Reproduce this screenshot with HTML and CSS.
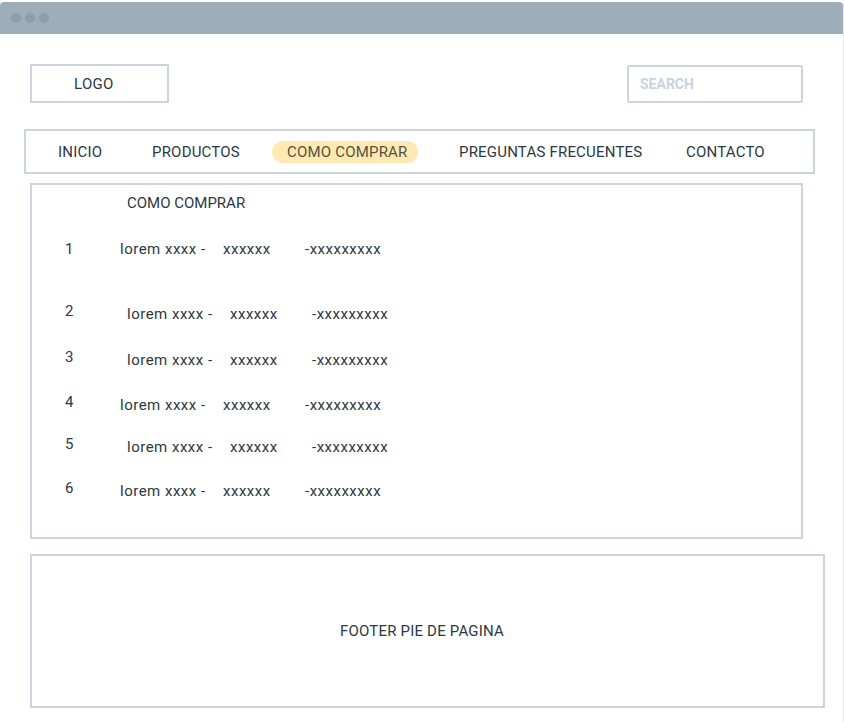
FILE: index.html
```html
<!DOCTYPE html>
<html lang="es">
<head>
<meta charset="utf-8">
<title>Como comprar</title>
<link rel="stylesheet" href="styles.css">
</head>
<body>
<div class="window">
  <div class="titlebar">
    <span class="dot"></span><span class="dot"></span><span class="dot"></span>
  </div>
  <header class="header">
    <div class="logo">LOGO</div>
    <div class="search">SEARCH</div>
  </header>
  <nav class="nav">
    <span class="nav-item">INICIO</span>
    <span class="nav-item">PRODUCTOS</span>
    <span class="nav-item"><span class="active">COMO COMPRAR</span></span>
    <span class="nav-item">PREGUNTAS FRECUENTES</span>
    <span class="nav-item">CONTACTO</span>
  </nav>
  <main class="content">
    <h1 class="title">COMO COMPRAR</h1>
    <div class="row r1"><span class="num">1</span><span class="txt"><span class="a">lorem xxxx -</span><span class="b">xxxxxx</span><span>-xxxxxxxxx</span></span></div>
    <div class="row r2 raised shift"><span class="num">2</span><span class="txt"><span class="a">lorem xxxx -</span><span class="b">xxxxxx</span><span>-xxxxxxxxx</span></span></div>
    <div class="row r3 raised shift"><span class="num">3</span><span class="txt"><span class="a">lorem xxxx -</span><span class="b">xxxxxx</span><span>-xxxxxxxxx</span></span></div>
    <div class="row r4 raised"><span class="num">4</span><span class="txt"><span class="a">lorem xxxx -</span><span class="b">xxxxxx</span><span>-xxxxxxxxx</span></span></div>
    <div class="row r5 raised shift"><span class="num">5</span><span class="txt"><span class="a">lorem xxxx -</span><span class="b">xxxxxx</span><span>-xxxxxxxxx</span></span></div>
    <div class="row r6 raised"><span class="num">6</span><span class="txt"><span class="a">lorem xxxx -</span><span class="b">xxxxxx</span><span>-xxxxxxxxx</span></span></div>
  </main>
  <footer class="footer">FOOTER PIE DE PAGINA</footer>
</div>
</body>
</html>
```
FILE: styles.css
```css
* { box-sizing: border-box; margin: 0; padding: 0; }
html, body { background: #ffffff; }
body {
  font-family: Roboto, "Liberation Sans", sans-serif;
  font-size: 15px;
  color: #2d3843;
}
.window {
  width: 844px;
  height: 722px;
  border-right: 1px solid #e6eaef;
}
.titlebar {
  margin-top: 2px;
  height: 32px;
  background: #9eadba;
  border-radius: 4px 4px 0 0;
  display: flex;
  align-items: center;
  gap: 4px;
  padding-left: 11px;
}
.dot {
  width: 10px;
  height: 10px;
  border-radius: 50%;
  background: #8f9eac;
}
.header {
  display: flex;
  justify-content: space-between;
  align-items: flex-start;
  margin-top: 30px;
  padding: 0 40px 0 30px;
}
.logo {
  width: 139px;
  height: 39px;
  border: 2px solid #cbd5df;
  display: flex;
  align-items: center;
  padding-left: 42px;
  font-size: 15px;
  letter-spacing: 0.3px;
}
.search {
  margin-top: 1px;
  width: 176px;
  height: 38px;
  border: 2px solid #cbd5df;
  border-radius: 3px;
  display: flex;
  align-items: center;
  padding-left: 11px;
  font-weight: bold;
  color: #c9d3de;
  font-size: 14px;
}
.nav {
  margin: 26px 0 0 24px;
  width: 791px;
  height: 45px;
  border: 2px solid #cbd5df;
  display: grid;
  grid-template-columns: 94px 120px 187px 227px auto;
  align-items: center;
  padding-left: 32px;
  font-size: 15px;
  letter-spacing: 0.2px;
}
.nav-item { white-space: nowrap; }
.active {
  display: inline-block;
  width: 146px;
  height: 22px;
  line-height: 22px;
  padding-left: 15px;
  border-radius: 11px;
  background: #fde9b1;
  color: #59523f;
}
.content {
  margin: 9px 0 0 30px;
  width: 773px;
  height: 356px;
  border: 2px solid #cbd5df;
  padding: 8px 0 0 33px;
}
.title {
  font-size: 15px;
  font-weight: normal;
  line-height: 20px;
  padding-left: 62px;
}
.row {
  display: flex;
  align-items: flex-start;
  line-height: 20px;
  font-size: 15px;
}
.num { width: 55px; line-height: 20px; }
.raised .num { margin-top: -3px; }
.shift .txt { padding-left: 7px; }
.txt { display: flex; white-space: nowrap; letter-spacing: 0.5px; }
.a { width: 103px; }
.b { width: 82px; }
.r1 { margin-top: 26px; }
.r2 { margin-top: 45px; }
.r3 { margin-top: 26px; }
.r4 { margin-top: 25px; }
.r5 { margin-top: 22px; }
.r6 { margin-top: 24px; }
.footer {
  margin: 15px 0 0 30px;
  width: 795px;
  height: 154px;
  border: 2px solid #cbd5df;
  display: flex;
  align-items: center;
  justify-content: center;
  padding-right: 11px;
  font-size: 15px;
  letter-spacing: 0.2px;
}
```
